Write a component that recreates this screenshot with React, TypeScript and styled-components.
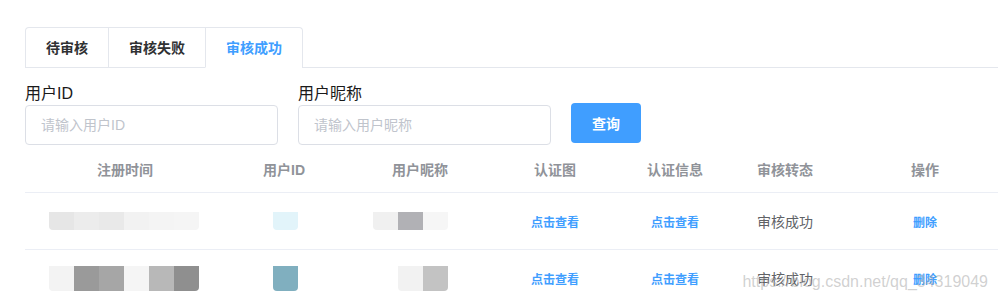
import React from "react";
import styled, { createGlobalStyle } from "styled-components";

const GlobalStyle = createGlobalStyle`
  html, body {
    margin: 0;
    padding: 0;
    height: 100%;
    background: #fff;
    overflow: hidden;
  }
  body {
    font-family: "Helvetica Neue", "Liberation Sans", "Noto Sans CJK SC", sans-serif;
    color: #303133;
  }
  * {
    box-sizing: border-box;
  }
`;

const Page = styled.div`
  position: relative;
  height: 302px;
  padding: 27px 0 0 25px;
  overflow: hidden;
`;

const TabsHeader = styled.div`
  display: flex;
  border-bottom: 1px solid #e4e7ed;
  margin-bottom: 15px;
`;

const TabsNav = styled.div`
  display: flex;
  border: 1px solid #e4e7ed;
  border-bottom: none;
  border-radius: 4px 4px 0 0;
  margin-bottom: -1px;
`;

const Tab = styled.div<{ active?: boolean }>`
  height: 40px;
  line-height: 40px;
  padding: 0 20px;
  font-size: 14px;
  font-weight: 600;
  color: ${({ active }) => (active ? "#409eff" : "#303133")};
  border-left: 1px solid #e4e7ed;
  border-bottom: 1px solid ${({ active }) => (active ? "#fff" : "transparent")};
  &:first-child {
    border-left: none;
  }
`;

const SearchForm = styled.div`
  display: flex;
  align-items: flex-end;
  gap: 20px;
`;

const FormItem = styled.div`
  display: flex;
  flex-direction: column;
`;

const Label = styled.label`
  font-size: 16px;
  line-height: 22px;
  color: #1a1a1a;
`;

const Input = styled.input`
  width: 253px;
  height: 40px;
  padding: 0 15px;
  border: 1px solid #dcdfe6;
  border-radius: 4px;
  font-family: inherit;
  font-size: 14px;
  color: #606266;
  outline: none;
  &::placeholder {
    color: #c0c4cc;
  }
`;

const SearchButton = styled.button`
  width: 70px;
  height: 40px;
  margin-bottom: 2px;
  border: none;
  border-radius: 4px;
  background: #409eff;
  color: #fff;
  font-family: inherit;
  font-size: 14px;
  font-weight: 600;
`;

const Table = styled.div`
  width: 992px;
`;

const Row = styled.div<{ head?: boolean }>`
  display: grid;
  grid-template-columns: 200px 118px 154px 116px 124px 96px 184px;
  height: ${({ head }) => (head ? "48px" : "57px")};
  border-bottom: 1px solid #ebeef5;
`;

const Cell = styled.div<{ align?: "left" | "center" }>`
  display: flex;
  align-items: center;
  justify-content: ${({ align }) => (align === "left" ? "flex-start" : "center")};
  font-size: 14px;
  color: #606266;
`;

const HeadCell = styled(Cell)`
  font-weight: 600;
  color: #909399;
`;

const Link = styled.span`
  font-size: 12px;
  font-weight: 600;
  color: #409eff;
`;

const Mosaic = styled.div<{ offset: number; tall?: boolean }>`
  display: flex;
  margin-left: ${({ offset }) => offset}px;
  height: ${({ tall }) => (tall ? "25px" : "18px")};
  border-radius: 0 0 4px 4px;
  overflow: hidden;
`;

const Pixel = styled.span<{ color: string }>`
  width: 25px;
  height: 100%;
  background: ${({ color }) => color};
`;

const Watermark = styled.div`
  position: absolute;
  right: 10px;
  bottom: 11px;
  font-family: "Liberation Sans", Arial, sans-serif;
  font-size: 16px;
  line-height: 18px;
  color: rgba(170, 170, 170, 0.55);
  pointer-events: none;
`;

type Blur = { offset: number; colors: string[] };

type Record = {
  time: Blur;
  id: Blur;
  nick: Blur;
  tall?: boolean;
};

const records: Record[] = [
  {
    time: { offset: 24, colors: ["#e6e6e6", "#ececec", "#e9e9e9", "#f2f2f2", "#f4f4f4", "#f5f5f5"] },
    id: { offset: 48, colors: ["#e2f4fa"] },
    nick: { offset: 30, colors: ["#f0f0f0", "#b1b1b5", "#f6f6f6"] },
  },
  {
    time: { offset: 24, colors: ["#f3f3f3", "#9a9a9a", "#a6a6a6", "#f5f5f5", "#b8b8b8", "#8f8f8f"] },
    id: { offset: 48, colors: ["#80afbf"] },
    nick: { offset: 55, colors: ["#f2f2f2", "#c3c3c3"] },
    tall: true,
  },
];

const columns = ["注册时间", "用户ID", "用户昵称", "认证图", "认证信息", "审核转态", "操作"];

const BlurCell: React.FC<{ blur: Blur; tall?: boolean }> = ({ blur, tall }) => (
  <Cell align="left">
    <Mosaic offset={blur.offset} tall={tall}>
      {blur.colors.map((c, i) => (
        <Pixel key={i} color={c} />
      ))}
    </Mosaic>
  </Cell>
);

const App: React.FC = () => {
  return (
    <>
      <GlobalStyle />
      <Page>
        <TabsHeader>
          <TabsNav>
            <Tab>待审核</Tab>
            <Tab>审核失败</Tab>
            <Tab active>审核成功</Tab>
          </TabsNav>
        </TabsHeader>
        <SearchForm>
          <FormItem>
            <Label>用户ID</Label>
            <Input placeholder="请输入用户ID" />
          </FormItem>
          <FormItem>
            <Label>用户昵称</Label>
            <Input placeholder="请输入用户昵称" />
          </FormItem>
          <SearchButton>查询</SearchButton>
        </SearchForm>
        <Table>
          <Row head>
            {columns.map((col) => (
              <HeadCell key={col}>{col}</HeadCell>
            ))}
          </Row>
          {records.map((r, i) => (
            <Row key={i}>
              <BlurCell blur={r.time} tall={r.tall} />
              <BlurCell blur={r.id} tall={r.tall} />
              <BlurCell blur={r.nick} tall={r.tall} />
              <Cell>
                <Link>点击查看</Link>
              </Cell>
              <Cell>
                <Link>点击查看</Link>
              </Cell>
              <Cell>审核成功</Cell>
              <Cell>
                <Link>删除</Link>
              </Cell>
            </Row>
          ))}
        </Table>
        <Watermark>https://blog.csdn.net/qq_34319049</Watermark>
      </Page>
    </>
  );
};

export default App;
